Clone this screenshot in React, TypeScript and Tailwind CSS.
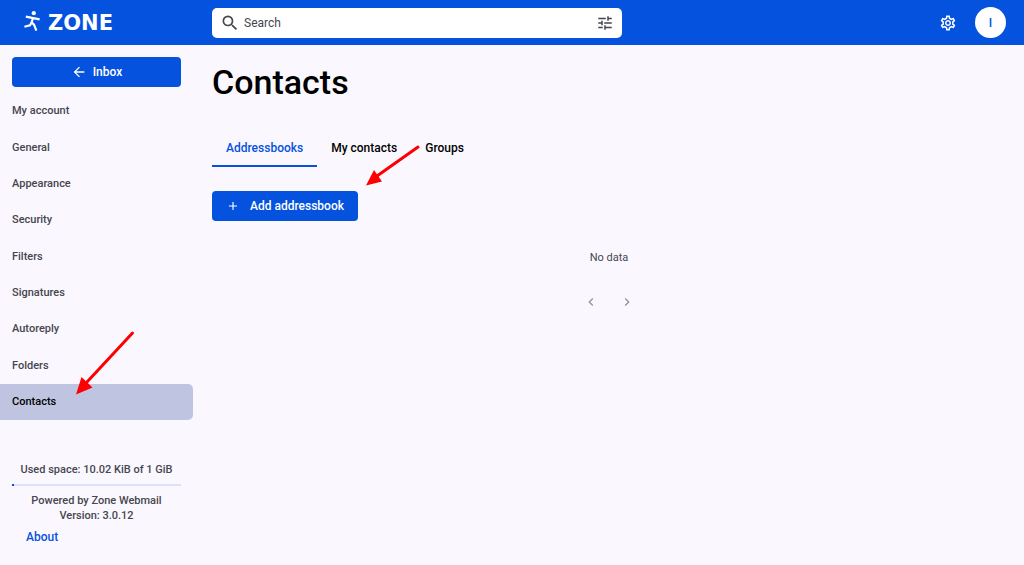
import { clsx } from "clsx";
import React, { useState } from "react";
import {
  MdAdd,
  MdArrowBack,
  MdChevronLeft,
  MdChevronRight,
  MdOutlineSettings,
  MdSearch,
  MdTune,
} from "react-icons/md";

const NAV_ITEMS = [
  "My account",
  "General",
  "Appearance",
  "Security",
  "Filters",
  "Signatures",
  "Autoreply",
  "Folders",
  "Contacts",
];

const TABS = ["Addressbooks", "My contacts", "Groups"];

const Logo = () => (
  <a href="#" className="flex items-center gap-2 text-white">
    <svg
      viewBox="0 0 16 20"
      className="mb-1 h-5 w-4"
      fill="none"
      stroke="currentColor"
      strokeWidth="2.2"
      aria-hidden="true"
    >
      <circle cx="9.8" cy="2.2" r="2.1" fill="currentColor" stroke="none" />
      <path d="M1.8 5.6 15.6 8.4" />
      <path d="M7.8 11.2 6 14.4 0.4 15.8" />
      <path d="M9 7.2 7.6 11.4 10 13.6 12.4 19.6" />
    </svg>
    <span className="font-['DejaVu_Sans',sans-serif] text-[21px] leading-5 font-bold">
      ZONE
    </span>
  </a>
);

const Header = () => (
  <header className="flex h-[45px] items-center bg-[#0552de]">
    <div className="w-[212px] shrink-0 pl-6">
      <Logo />
    </div>
    <label className="flex h-[30px] w-2/5 items-center rounded-[5px] bg-white pr-2 pl-2 text-[#46464f]">
      <MdSearch className="size-5 shrink-0" />
      <input
        type="search"
        aria-label="Search"
        placeholder="Search"
        className="ml-1 min-w-0 flex-1 text-xs outline-none placeholder:text-[#46464f]"
      />
      <button type="button" aria-label="Search filters">
        <MdTune className="size-4.5" />
      </button>
    </label>
    <div className="ml-auto flex items-center gap-4.5 pr-4.5">
      <button type="button" aria-label="Settings" className="text-white">
        <MdOutlineSettings className="size-4.5" />
      </button>
      <button
        type="button"
        aria-label="Profile"
        className="size-[31px] rounded-full bg-white text-xs font-medium text-[#0552de]"
      >
        I
      </button>
    </div>
  </header>
);

const Sidebar = () => (
  <aside className="w-[193px] shrink-0 pt-3 text-[11px] font-medium text-[#46464f]">
    <div className="pr-3 pl-3">
      <button
        type="button"
        className="flex h-[30px] w-full items-center justify-center gap-1.5 rounded-[4px] bg-[#0552de] text-xs text-white"
      >
        <MdArrowBack className="size-4" />
        Inbox
      </button>
    </div>
    <nav className="relative mt-1.5 grid h-[327px] auto-rows-fr">
      {NAV_ITEMS.map((item) => (
        <a
          key={item}
          href="#"
          className={clsx(
            "flex items-center rounded-r-[5px] pt-px pl-3",
            item === "Contacts" && "bg-[#bfc5e0] text-black"
          )}
        >
          {item}
        </a>
      ))}
      <svg
        viewBox="0 0 60 66"
        className="pointer-events-none absolute right-[58px] bottom-6 h-[66px] w-[60px]"
        aria-hidden="true"
      >
        <path d="M57.5 3 12 52" stroke="#fe0000" strokeWidth="3" strokeLinecap="round" />
        <path d="M1 64.5 6.5 47 17.5 57.5Z" fill="#fe0000" />
      </svg>
    </nav>
    <div className="mt-[42px] pr-3 pl-3 text-center">
      <p className="leading-4">Used space: 10.02 KiB of 1 GiB</p>
      <div className="mt-1.5 h-0.5 bg-[#d9e2f9]">
        <div className="h-full w-0.5 bg-[#0552de]" />
      </div>
      <p className="mt-[7px] leading-[15px]">
        Powered by Zone Webmail
        <br />
        Version: 3.0.12
      </p>
      <a
        href="#"
        className="mt-1.5 ml-3.5 block w-fit text-xs font-medium text-[#0552de]"
      >
        About
      </a>
    </div>
  </aside>
);

const Contacts = () => {
  const [activeTab, setActiveTab] = useState<string>(TABS[0]);

  return (
    <main className="min-w-0 flex-1 pr-[18px] pl-[19px]">
      <h1 className="pt-[17px] text-[34px] leading-10 font-medium">Contacts</h1>
      <div className="relative mt-[29px] flex w-fit" role="tablist">
        {TABS.map((tab) => (
          <button
            key={tab}
            type="button"
            role="tab"
            aria-selected={tab === activeTab}
            onClick={() => setActiveTab(tab)}
            className={clsx(
              "h-9 border-b-2 px-3.5 text-xs font-medium",
              tab === activeTab
                ? "border-[#0552de] text-[#0552de]"
                : "border-transparent"
            )}
          >
            {tab}
          </button>
        ))}
        <svg
          viewBox="0 0 56 44"
          className="pointer-events-none absolute top-3 left-[153px] h-11 w-14"
          aria-hidden="true"
        >
          <path d="M53 4 12 33" stroke="#fe0000" strokeWidth="3" strokeLinecap="round" />
          <path d="M1 42.5 9 27 17 38.5Z" fill="#fe0000" />
        </svg>
      </div>
      <button
        type="button"
        className="mt-6 flex h-[30px] items-center gap-2.5 rounded-[4px] bg-[#0552de] pr-3.5 pl-3.5 text-xs font-medium text-white"
      >
        <MdAdd className="size-3.5" />
        Add addressbook
      </button>
      <p className="mt-[29px] text-center text-[11px] leading-4 text-[#46464f]">
        No data
      </p>
      <div className="mt-7 flex justify-center gap-5 text-[#93939a]">
        <button type="button" aria-label="Previous page">
          <MdChevronLeft className="size-4" />
        </button>
        <button type="button" aria-label="Next page">
          <MdChevronRight className="size-4" />
        </button>
      </div>
    </main>
  );
};

const App = () => (
  <div className="min-h-screen bg-[#faf8fe] font-[Roboto,sans-serif] text-black">
    <Header />
    <div className="flex">
      <Sidebar />
      <Contacts />
    </div>
  </div>
);

export default App;
